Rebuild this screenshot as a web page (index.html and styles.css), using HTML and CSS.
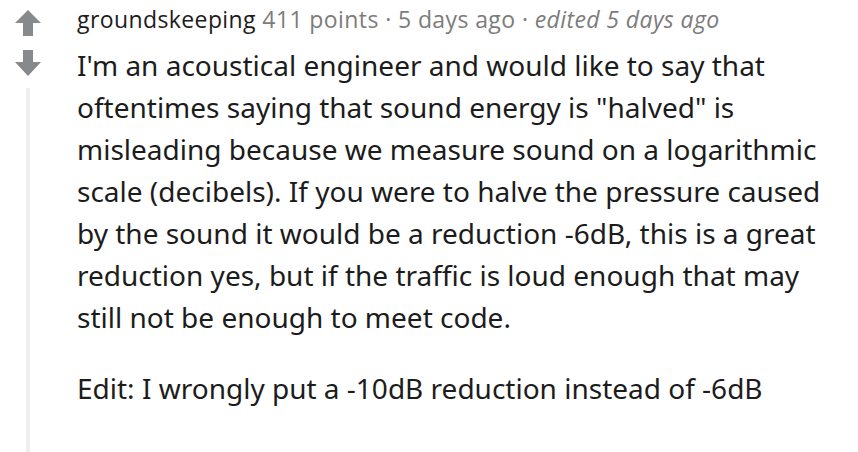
FILE: index.html
```html
<!DOCTYPE html>
<html>
<head>
<meta charset="utf-8">
<link rel="stylesheet" href="styles.css">
</head>
<body>
<div class="comment">
  <div class="votes">
    <svg class="arrow up" width="26" height="26" viewBox="0 0 26 26"><path d="M13 0 L26 13 H18 V26 H8 V13 H0 Z" fill="#878a8c"/></svg>
    <svg class="arrow down" width="26" height="26" viewBox="0 0 26 26"><path d="M8 0 H18 V12 H26 L13 26 L0 12 H8 Z" fill="#878a8c"/></svg>
    <div class="thread-line"></div>
  </div>
  <div class="main">
    <div class="meta">
      <span class="user">groundskeeping</span>
      <span class="points">411 points</span>
      <span class="dot">·</span>
      <span class="time">5 days ago</span>
      <span class="dot">·</span>
      <span class="edited">edited 5 days ago</span>
    </div>
    <div class="body">
      <p>I'm an acoustical engineer and would like to say that oftentimes saying that sound energy is "halved" is misleading because we measure sound on a logarithmic scale (decibels). If you were to halve the pressure caused by the sound it would be a reduction -6dB, this is a great reduction yes, but if the traffic is loud enough that may still not be enough to meet code.</p>
      <p>Edit: I wrongly put a -10dB reduction instead of -6dB</p>
    </div>
  </div>
</div>
</body>
</html>
```
FILE: styles.css
```css
html, body {
  margin: 0;
  padding: 0;
  background: #ffffff;
}
.comment {
  display: flex;
  height: 452px;
}
.votes {
  width: 77px;
  flex: none;
  display: flex;
  flex-direction: column;
  align-items: flex-start;
  padding: 10px 0 0 15px;
  box-sizing: border-box;
}
.arrow {
  display: block;
}
.arrow.up {
  margin-bottom: 14px;
}
.arrow.down {
  margin-bottom: 12px;
}
.thread-line {
  width: 4px;
  flex: 1;
  background: #edeff1;
  margin-left: 11px;
}
.main {
  width: 760px;
}
.meta {
  font-family: "Open Sans", sans-serif;
  font-size: 23px;
  letter-spacing: 0.4px;
  line-height: 28px;
  padding-top: 5px;
  color: #7c7c7c;
  white-space: nowrap;
}
.user {
  color: #1c1c1c;
}
.edited {
  font-style: italic;
}
.body {
  font-family: "Noto Sans", sans-serif;
  font-size: 28px;
  line-height: 42px;
  color: #1c1c1c;
  margin-top: 11px;
}
.body p {
  margin: 0 0 29px 0;
}
```
